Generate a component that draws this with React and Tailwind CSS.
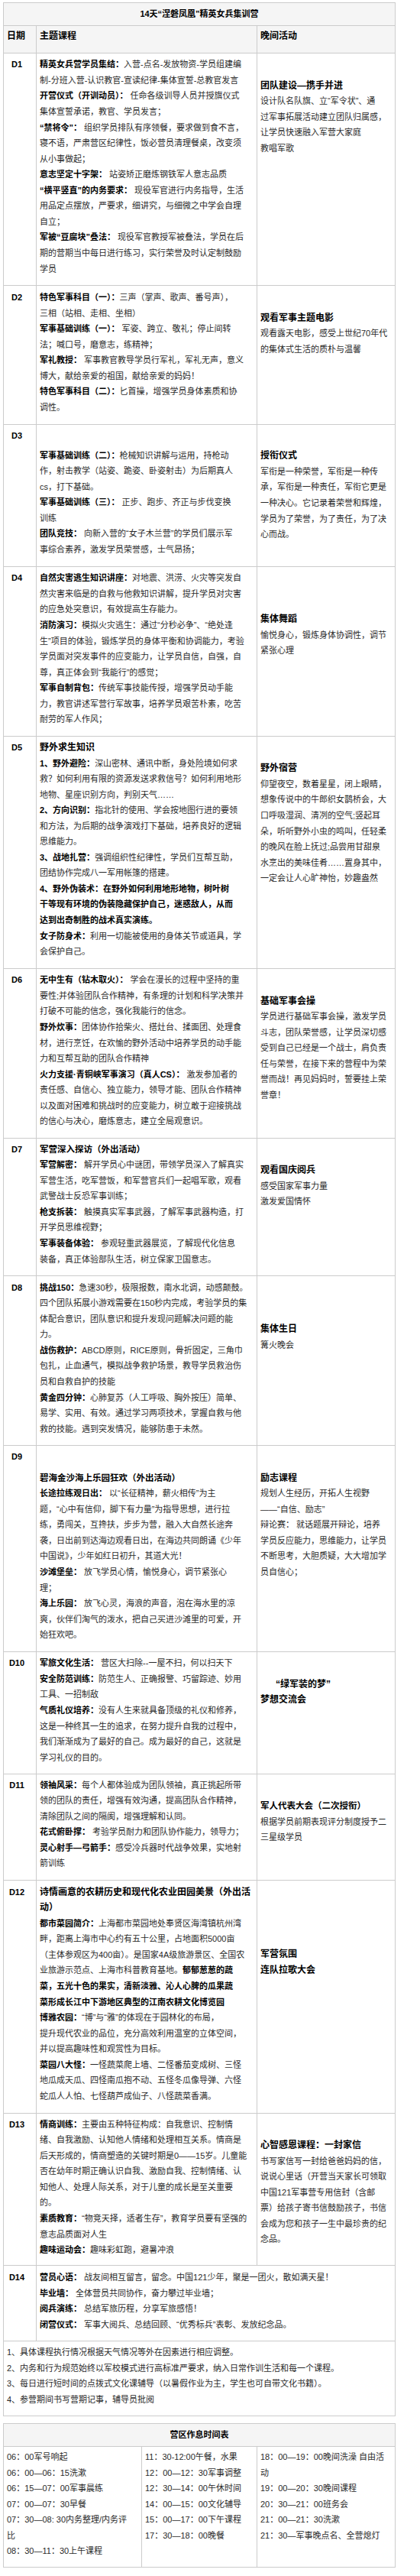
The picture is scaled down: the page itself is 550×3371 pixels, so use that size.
import React from "react";

function Segs({ s }) {
  const parts = s.split("**");
  return parts.map((p, i) =>
    i % 2 ? (
      <span key={i} className="font-bold text-black">
        {p}
      </span>
    ) : (
      <span key={i}>{p}</span>
    )
  );
}

function Lines({ lines }) {
  return lines.map((ln, i) => {
    const o = typeof ln === "string" ? { s: ln } : ln;
    return (
      <div key={i} className={`whitespace-nowrap leading-[20.55px] ${o.c || ""}`}>
        {o.s === "" ? "\u00a0" : <Segs s={o.s} />}
      </div>
    );
  });
}

const T = (s) => ({ s: `**${s}**`, c: "text-[12px]" });
const M = (s) => ({ s: `**${s}**`, c: "text-[11.5px]" });

const rows = [
  {
    d: "D1",
    h: "h-[304px]",
    lp: "pt-[4.4px]",
    mp: "pt-[4.4px]",
    rp: "pt-[31.7px]",
    main: [
      "**精英女兵营学员集结：**入营-点名-发放物资-学员组建编",
      "制-分班入营-认识教官-宣读纪律-集体宣誓-总教官发言",
      "**开营仪式（开训动员）：** 任命各级训导人员并授旗仪式",
      "集体宣誓承诺，教官、学员发言；",
      "**“禁将令”：** 组织学员排队有序领餐，要求做到食不言，",
      "寝不语，严肃营区纪律性，饭必营员清理餐桌，改变须",
      "从小事做起；",
      "**意志坚定十字架：** 站姿矫正磨炼钢铁军人意志品质",
      "**“横平竖直”的内务要求：** 现役军官进行内务指导，生活",
      "用品定点摆放，严要求，细讲究，与细微之中学会自理",
      "自立；",
      "**军被“豆腐块”叠法：** 现役军官教授军被叠法，学员在后",
      "期的营期当中每日进行练习，实行荣誉及时认定制鼓励",
      "学员",
    ],
    right: [
      T("团队建设—携手并进"),
      "设计队名队旗、立“军令状”、通",
      "过军事拓展活动建立团队归属感，",
      "让学员快速融入军营大家庭",
      "教唱军歌",
    ],
  },
  {
    d: "D2",
    h: "h-[182px]",
    lp: "pt-[5px]",
    mp: "pt-[5px]",
    rp: "pt-[31.7px]",
    main: [
      "**特色军事科目（一）：**三声（掌声、歌声、番号声），",
      "三相（站相、走相、坐相）",
      "**军事基础训练（一）：** 军姿、跨立、敬礼；停止间转",
      "法；喊口号，磨意志，练精神；",
      "**军礼教授：** 军事教官教导学员行军礼，军礼无声，意义",
      "博大，献给亲爱的祖国，献给亲爱的妈妈！",
      "**特色军事科目（二）：**匕首操，增强学员身体素质和协",
      "调性。",
    ],
    right: [T("观看军事主题电影"), "观看露天电影，感受上世纪70年代", "的集体式生活的质朴与温馨"],
  },
  {
    d: "D3",
    h: "h-[186px]",
    lp: "pt-[3.7px]",
    mp: "pt-[29.7px]",
    rp: "pt-[30.4px]",
    main: [
      "**军事基础训练（二）：**枪械知识讲解与运用，持枪动",
      "作，射击教学（站姿、跪姿、卧姿射击）为后期真人",
      "cs，打下基础。",
      "**军事基础训练（三）：** 正步、跑步、齐正与步伐变换",
      "训练",
      "**团队竞技：** 向新入营的“女子木兰营”的学员们展示军",
      "事综合素养，激发学员荣誉感，士气昂扬；",
    ],
    right: [
      T("授衔仪式"),
      "军衔是一种荣誉，军衔是一种传",
      "承，军衔是一种责任，军衔它更是",
      "一种决心。它记录着荣誉和辉煌，",
      "学员为了荣誉，为了责任，为了决",
      "心而战。",
    ],
  },
  {
    d: "D4",
    h: "h-[222px]",
    lp: "pt-[4.4px]",
    mp: "pt-[4.4px]",
    rp: "pt-[58.4px]",
    main: [
      "**自然灾害逃生知识讲座：**对地震、洪涝、火灾等突发自",
      "然灾害来临是的自救与他救知识讲解，提升学员对灾害",
      "的应急处突意识，有效提高生存能力。",
      "**消防演习：**模拟火灾逃生：通过“分秒必争”、“绝处逢",
      "生”项目的体验，锻炼学员的身体平衡和协调能力，考验",
      "学员面对突发事件的应变能力，让学员自信，自强，自",
      "尊，真正体会到“我能行”的感觉；",
      "**军事自制背包：**传统军事技能传授，增强学员动手能",
      "力，教官讲述军营行军故事，培养学员艰苦朴素，吃苦",
      "耐劳的军人作风；",
    ],
    right: [T("集体舞蹈"), "愉悦身心，锻炼身体协调性，调节", "紧张心理"],
  },
  {
    d: "D5",
    h: "h-[304px]",
    lp: "pt-[4px]",
    mp: "pt-[4px]",
    rp: "pt-[31.4px]",
    main: [
      T("野外求生知识"),
      "**1、野外避险：**深山密林、通讯中断，身处险境如何求",
      "救？如何利用有限的资源发送求救信号？如何利用地形",
      "地物、星座识别方向，判别天气……",
      "**2、方向识别：**指北针的使用、学会按地图行进的要领",
      "和方法，为后期的战争演戏打下基础，培养良好的逻辑",
      "思维能力。",
      "**3、战地扎营：**强调组织性纪律性，学员们互帮互助，",
      "团结协作完成八一军用帐篷的搭建。",
      "**4、野外伪装术：在野外如何利用地形地物，树叶树**",
      "**干等现有环境的伪装隐藏保护自己，迷惑敌人，从而**",
      "**达到出奇制胜的战术真实演练。**",
      "**女子防身术：**利用一切能被使用的身体关节或道具，学",
      "会保护自己。",
    ],
    right: [
      T("野外宿营"),
      "仰望夜空，数着星星，闭上眼睛，",
      "想象传说中的牛郎织女鹊桥会，大",
      "口呼吸湿润、清冽的空气;竖起耳",
      "朵，听听野外小虫的鸣叫，任轻柔",
      "的晚风在脸上抚过;品尝用甘甜泉",
      "水烹出的美味佳肴……置身其中，",
      "一定会让人心旷神怡，妙趣盎然",
    ],
  },
  {
    d: "D6",
    h: "h-[222px]",
    lp: "pt-[4.4px]",
    mp: "pt-[4.4px]",
    rp: "pt-[31.7px]",
    main: [
      "**无中生有（钻木取火）：** 学会在漫长的过程中坚持的重",
      "要性;并体验团队合作精神，有条理的计划和科学决策并",
      "打破不可能的信念，强化我能行的信念。",
      "**野外炊事：**团体协作拾柴火、搭灶台、揉面团、处理食",
      "材，进行烹饪，在欢愉的野外活动中培养学员的动手能",
      "力和互帮互助的团队合作精神",
      "**火力支援·青铜峡军事演习（真人CS）：** 激发参加者的",
      "责任感、自信心、独立能力，领导才能、团队合作精神",
      "以及面对困难和挑战时的应变能力，树立敢于迎接挑战",
      "的信心与决心，磨炼意志，建立全局观意识。",
    ],
    right: [
      T("基础军事会操"),
      "学员进行基础军事会操，激发学员",
      "斗志，团队荣誉感，让学员深切感",
      "受到自己已经是一个战士，肩负责",
      "任与荣誉，在接下来的营程中为荣",
      "誉而战！再见妈妈时，誓要挂上荣",
      "誉章！",
    ],
  },
  {
    d: "D7",
    h: "h-[180px]",
    lp: "pt-[3.7px]",
    mp: "pt-[3.7px]",
    rp: "pt-[31.4px]",
    main: [
      M("军营深入探访（外出活动）"),
      "**军营解密：** 解开学员心中谜团，带领学员深入了解真实",
      "军营生活，吃军营饭，和军营官兵们一起唱军歌，观看",
      "武警战士反恐军事训练；",
      "**枪支拆装：** 触摸真实军事武器，了解军事武器构造，打",
      "开学员思维视野；",
      "**军事装备体验：** 参观轻重武器展览，了解现代化信息",
      "装备，真正体验部队生活，树立保家卫国意志。",
    ],
    right: [T("观看国庆阅兵"), "感受国家军事力量", "激发爱国情怀"],
  },
  {
    d: "D8",
    h: "h-[222px]",
    lp: "pt-[4.7px]",
    mp: "pt-[4.7px]",
    rp: "pt-[59px]",
    main: [
      "**挑战150：**急速30秒，极限报数，南水北调，动感颠鼓。",
      "四个团队拓展小游戏需要在150秒内完成，考验学员的集",
      "体配合意识，团队意识和提升发现问题解决问题的能",
      "力。",
      "**战伤救护：**ABCD原则，RICE原则，骨折固定，三角巾",
      "包扎，止血通气，模拟战争救护场景，教导学员救治伤",
      "员和自救自护的技能",
      "**黄金四分钟：**心肺复苏（人工呼吸、胸外按压）简单、",
      "易学、实用、有效。通过学习两项技术，掌握自救与他",
      "救的技能。遇到突发情况，能够防患于未然。",
    ],
    right: [T("集体生日"), "篝火晚会"],
  },
  {
    d: "D9",
    h: "h-[270px]",
    lp: "pt-[4.4px]",
    mp: "pt-[31.7px]",
    rp: "pt-[31.7px]",
    main: [
      M("碧海金沙海上乐园狂欢（外出活动）"),
      "**长途拉练观日出：** 以“长征精神，薪火相传”为主",
      "题，“心中有信仰，脚下有力量”为指导思想，进行拉",
      "练，勇闯关，互搀扶，步步为营，融入大自然长途奔",
      "袭，日出前到达海边观看日出，在海边共同朗诵《少年",
      "中国说》，少年如红日初升，其道大光！",
      "**沙滩堡垒：** 放飞学员心情，愉悦身心，调节紧张心",
      "理；",
      "**海上乐园：** 放飞心灵，海浪的声音，泡在海水里的凉",
      "爽，伙伴们淘气的泼水，把自己买进沙滩里的可爱，开",
      "始狂欢吧。",
    ],
    right: [
      T("励志课程"),
      "规划人生经历，开拓人生视野",
      "——“自信、励志”",
      "辩论赛： 就话题展开辩论，培养",
      "学员反应能力，思维能力，让学员",
      "不断思考，大胆质疑，大大增加学",
      "员自信心；",
    ],
  },
  {
    d: "D10",
    h: "h-[160px]",
    lp: "pt-[4.4px]",
    mp: "pt-[4.4px]",
    rp: "pt-[31.7px]",
    main: [
      "**军旅文化生活：** 营区大扫除--一屋不扫，何以扫天下",
      "**安全防范训练：**防范生人、正确报警、巧留踪迹、妙用",
      "工具、一招制敌",
      "**气质礼仪培养：**没有人生来就具备顶级的礼仪和修养，",
      "这是一种终其一生的追求，在努力提升自我的过程中，",
      "我们渐渐成为了最好的自己。成为最好的自己，这就是",
      "学习礼仪的目的。",
    ],
    right: [{ s: "**“绿军装的梦”**", c: "text-[12px] pl-[20px]" }, T("梦想交流会")],
  },
  {
    d: "D11",
    h: "h-[139px]",
    lp: "pt-[3.7px]",
    mp: "pt-[3.7px]",
    rp: "pt-[31px]",
    main: [
      "**领袖风采：**每个人都体验成为团队领袖，真正挑起所带",
      "领的团队的责任，增强有效沟通，提高团队合作精神，",
      "清除团队之间的隔阂，增强理解和认同。",
      "**花式俯卧撑：** 考验学员耐力和团队协作能力，领导力；",
      "**灵心射手—弓箭手：**感受冷兵器时代战争效果，实地射",
      "箭训练",
    ],
    right: [M("军人代表大会（二次授衔）"), "根据学员前期表现评分制度授予二", "三星级学员"],
  },
  {
    d: "D12",
    h: "h-[305px]",
    lp: "pt-[4.7px]",
    mp: "pt-[4.7px]",
    rp: "pt-[86px]",
    main: [
      T("诗情画意的农耕历史和现代化农业田园美景（外出活"),
      T("动）"),
      "**都市菜园简介：**上海都市菜园地处奉贤区海湾镇杭州湾",
      "畔，距离上海市中心约有五十公里，占地面积5000亩",
      "（主体参观区为400亩）。是国家4A级旅游景区、全国农",
      "业旅游示范点、上海市科普教育基地。**郁郁葱葱的蔬**",
      "**菜，五光十色的果实，清新淡雅、沁人心脾的瓜果蔬**",
      "**菜形成长江中下游地区典型的江南农耕文化博览园**",
      "**博雅农园：**“博”与“雅”的体现在于园林化的布局，",
      "提升现代农业的品位，充分高效利用温室的立体空间，",
      "并以提高趣味性和观赏性为目标。",
      "**菜园八大怪：**一怪蔬菜爬上墙、二怪番茄变成树、三怪",
      "地瓜成天瓜、四怪南瓜抱不动、五怪冬瓜像导弹、六怪",
      "蛇瓜人人怕、七怪葫芦成仙子、八怪蔬菜香满。",
    ],
    right: [T("军营氛围"), T("连队拉歌大会")],
  },
  {
    d: "D13",
    h: "h-[199px]",
    lp: "pt-[3.7px]",
    mp: "pt-[3.7px]",
    rp: "pt-[31px]",
    main: [
      "**情商训练：**主要由五种特征构成：自我意识、控制情",
      "绪、自我激励、认知他人情绪和处理相互关系。情商是",
      "后天形成的，情商塑造的关键时期是0——15岁。儿童能",
      "否在幼年时期正确认识自我、激励自我、控制情绪、认",
      "知他人、处理人际关系，对于儿童的成长是至关重要",
      "的。",
      "**素质教育：**“物竞天择，适者生存”，教育学员要有坚强的",
      "意志品质面对人生",
      "**趣味运动会：**趣味彩虹跑，避暑冲浪",
    ],
    right: [
      T("心智感恩课程：一封家信"),
      "书写家信写一封给爸爸妈妈的信，",
      "说说心里话（开营当天家长可领取",
      "中国121军事营专用信封（含邮",
      "票）给孩子寄书信鼓励孩子，书信",
      "会成为您和孩子一生中最珍贵的纪",
      "念品。",
    ],
  },
];

const d14 = [
  "**营员心语：** 战友间相互留言，留念。中国121少年，聚是一团火，散如满天星！",
  "**毕业墙：** 全体营员共同协作，奋力攀过毕业墙；",
  "**阅兵演练：** 总结军旅历程，分享军旅感悟！",
  "**闭营仪式：** 军事大阅兵、总结回顾、“优秀标兵”表彰、发放纪念品。",
];

const notes = [
  "1、具体课程执行情况根据天气情况等外在因素进行相应调整。",
  "2、内务和行为规范始终以军校模式进行高标准严要求，纳入日常作训生活和每一个课程。",
  "3、每日进行短时间的点拨式文化课辅导（以暑假作业为主，学生也可自带文化书籍）。",
  "4、参营期间书写营期记事，辅导员批阅",
];

const sched = [
  [
    "06：00军号响起",
    "06：00—06：15洗漱",
    "06：15—07：00军事晨练",
    "07：00—07：30早餐",
    "07：30—08: 30内务整理/内务评",
    "比",
    "08：30—11：30上午课程",
  ],
  [
    "11：30-12:00午餐，水果",
    "12：00—12：30军事调整",
    "12：30—14：00午休时间",
    "14：00—15：00文化辅导",
    "15：00—17：00下午课程",
    "17：30—18：00晚餐",
  ],
  [
    "18：00—19：00晚间洗澡 自由活",
    "动",
    "19：00—20：30晚间课程",
    "20：30—21：00班务会",
    "21：00—21：30洗漱",
    "21：30—军事晚点名、全营熄灯",
  ],
];

export default function App() {
  return (
    <div className="w-[550px] min-h-[3371px] bg-white pt-[3px] font-['Liberation_Sans','Noto_Sans_CJK_SC',sans-serif] text-[11px] text-[#2a2a2a]">
      <div className="ml-[4px] w-[514px] border border-[#cccccc]">
        <div className="h-[29px] bg-[#f5f5f5] flex items-center justify-center font-bold text-[11px] text-black">
          14天“涅磐凤凰”精英女兵集训营
        </div>
        <div className="grid grid-cols-[42px_289px_181px] h-[36px] border-t border-[#cccccc] bg-[#f5f5f5] text-[12px] font-bold text-black leading-[20.55px]">
          <div className="pl-[4px] pt-[3.4px]">日期</div>
          <div className="border-l border-[#cccccc] pl-[4px] pt-[3.4px]">主题课程</div>
          <div className="border-l border-[#cccccc] pl-[4px] pt-[3.4px]">晚间活动</div>
        </div>
        {rows.map((r) => (
          <div key={r.d} className={`grid grid-cols-[42px_289px_181px] border-t border-[#cccccc] ${r.h}`}>
            <div className={`text-center pr-[8px] font-bold text-black leading-[20.55px] ${r.lp}`}>{r.d}</div>
            <div className={`border-l border-[#cccccc] pl-[4px] ${r.mp}`}>
              <Lines lines={r.main} />
            </div>
            <div className={`border-l border-[#cccccc] pl-[4px] ${r.rp}`}>
              <Lines lines={r.right} />
            </div>
          </div>
        ))}
        <div className="grid grid-cols-[42px_289px_181px] border-t border-[#cccccc] h-[99px]">
          <div className="text-center pr-[8px] font-bold text-black leading-[20.55px] pt-[5.4px]">D14</div>
          <div className="col-span-2 border-l border-[#cccccc] pl-[4px] pt-[5.4px]">
            <Lines lines={d14} />
          </div>
        </div>
        <div className="border-t border-[#cccccc] h-[98px] pl-[4px] pt-[4px]">
          <Lines lines={notes} />
        </div>
      </div>

      <div className="mt-[9px] ml-[4px] w-[514px] border border-[#cccccc]">
        <div className="h-[29px] bg-[#f5f5f5] flex items-center justify-center font-bold text-[11px] text-black">
          营区作息时间表
        </div>
        <div className="grid grid-cols-[180px_151px_181px] border-t border-[#cccccc] h-[158px]">
          {sched.map((col, i) => (
            <div key={i} className={`pl-[4px] pt-[3px] ${i > 0 ? "border-l border-[#cccccc]" : ""}`}>
              <Lines lines={col} />
            </div>
          ))}
        </div>
      </div>
    </div>
  );
}
